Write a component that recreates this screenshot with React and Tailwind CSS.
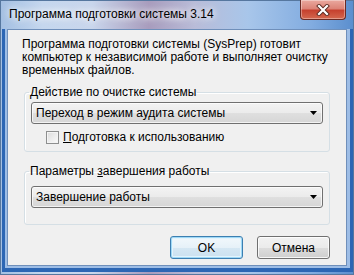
import React from "react"

const Combo = ({ children }) => (
	<div className="flex items-center h-[22px] pl-[4px] pr-[5px] border border-[#707070] rounded-[3px] bg-[linear-gradient(#f3f3f3,#ebebeb_50%,#dfdfdf_51%,#d6d6d6)] shadow-[inset_0_0_0_1px_rgba(255,255,255,0.7)]">
		<span className="flex-1 whitespace-nowrap leading-[15px]">{children}</span>
		<svg width="7" height="4" viewBox="0 0 7 4">
			<path d="M0 0h7L3.5 4z" fill="#000" />
		</svg>
	</div>
)

const Group = ({ label, children, className }) => (
	<fieldset
		className={`mx-[2px] px-[6px] border border-[#d5dfe5] rounded-[3px] shadow-[inset_1px_1px_0_#fff] ${className}`}>
		<legend className="ml-[-2px] px-[1px] leading-[13px]">{label}</legend>
		{children}
	</fieldset>
)

export default function App() {
	return (
		<div className="w-[354px] h-[275px] flex flex-col overflow-hidden font-['Liberation_Sans',Arial,sans-serif] text-[12px] text-black bg-[linear-gradient(90deg,#a3bfe2_0%,#c5d7ee_12%,#c9d6ec_26%,#a89cbd_42%,#b9bcd8_55%,#a8c6ea_70%,#82ace0_88%,#5a8ece_100%)] shadow-[inset_0_0_0_1px_#56779f]">
			{/* title bar */}
			<div className="h-[29px] flex items-start justify-between pl-[9px] pr-[8px]">
				<span className="mt-[7px] leading-[15px] whitespace-nowrap [text-shadow:0_0_6px_#fff,0_0_10px_#fff]">
					Программа подготовки системы 3.14
				</span>
				<div className="w-[46px] h-[20px] flex items-center justify-center rounded-b-[4px] border border-t-0 border-[#6b2b25] bg-[linear-gradient(#eaa99f,#dc8377_45%,#c6412f_55%,#d4684f)] shadow-[inset_0_0_0_1px_rgba(255,255,255,0.35)]">
					<svg width="14" height="12" viewBox="0 0 14 12">
						<path d="M3 2l8 8M11 2l-8 8" stroke="#5a2a22" strokeWidth="4" strokeLinecap="square" />
						<path d="M3 2l8 8M11 2l-8 8" stroke="#fff" strokeWidth="2.2" strokeLinecap="square" />
					</svg>
				</div>
			</div>

			{/* frame */}
			<div className="flex-1 flex pl-[2px] pr-[1px] pb-[3px]">
				<div className="flex-1 flex border-l-[3px] border-r-[3px] border-b-[4px] border-[#2c66b4]">
					<div className="flex-1 flex pl-[2px] pr-[3px] pb-[2px] bg-[#9dbde6]">
						<div className="flex-1 flex flex-col border border-[#6f8fba] bg-[#f0f0f0] px-[14px] pt-[8px]">
							<p className="leading-[13px] whitespace-nowrap">
								Программа подготовки системы (SysPrep) готовит
								<br />
								компьютер к независимой работе и выполняет очистку
								<br />
								временных файлов.
							</p>

							<Group
								className="mt-[9px] pb-[7px]"
								label={
									<>
										<span className="underline">Д</span>ействие по очистке системы
									</>
								}>
								<div className="mt-[3px]">
									<Combo>Переход в режим аудита системы</Combo>
								</div>
								<label className="mt-[7px] ml-[15px] flex items-center gap-[4px] leading-[13px]">
									<span className="w-[13px] h-[13px] border border-[#8e8f8f] bg-[linear-gradient(135deg,#dcdcdc,#fbfbfb)] shadow-[inset_0_0_0_1px_#f4f4f4]" />
									<span>
										<span className="underline">П</span>одготовка к использованию
									</span>
								</label>
							</Group>

							<Group
								className="mt-[13px] pb-[16px]"
								label={
									<>
										Параметры <span className="underline">з</span>авершения работы
									</>
								}>
								<div className="mt-[8px]">
									<Combo>Завершение работы</Combo>
								</div>
							</Group>

							<div className="mt-[11px] mr-[2px] flex justify-end gap-[14px]">
								<button className="w-[73px] h-[23px] rounded-[3px] border border-[#3c7fb1] bg-[linear-gradient(#f2f8fc,#e6f1f8_50%,#d5e7f3_51%,#cbe1f0)] shadow-[inset_0_0_0_1px_#9fd8f6,inset_0_0_0_2px_#e3f4fc]">
									OK
								</button>
								<button className="w-[73px] h-[23px] rounded-[3px] border border-[#707070] bg-[linear-gradient(#f2f2f2,#ebebeb_50%,#dddddd_51%,#cfcfcf)] shadow-[inset_0_0_0_1px_rgba(255,255,255,0.8)]">
									Отмена
								</button>
							</div>
						</div>
					</div>
				</div>
			</div>
		</div>
	)
}
